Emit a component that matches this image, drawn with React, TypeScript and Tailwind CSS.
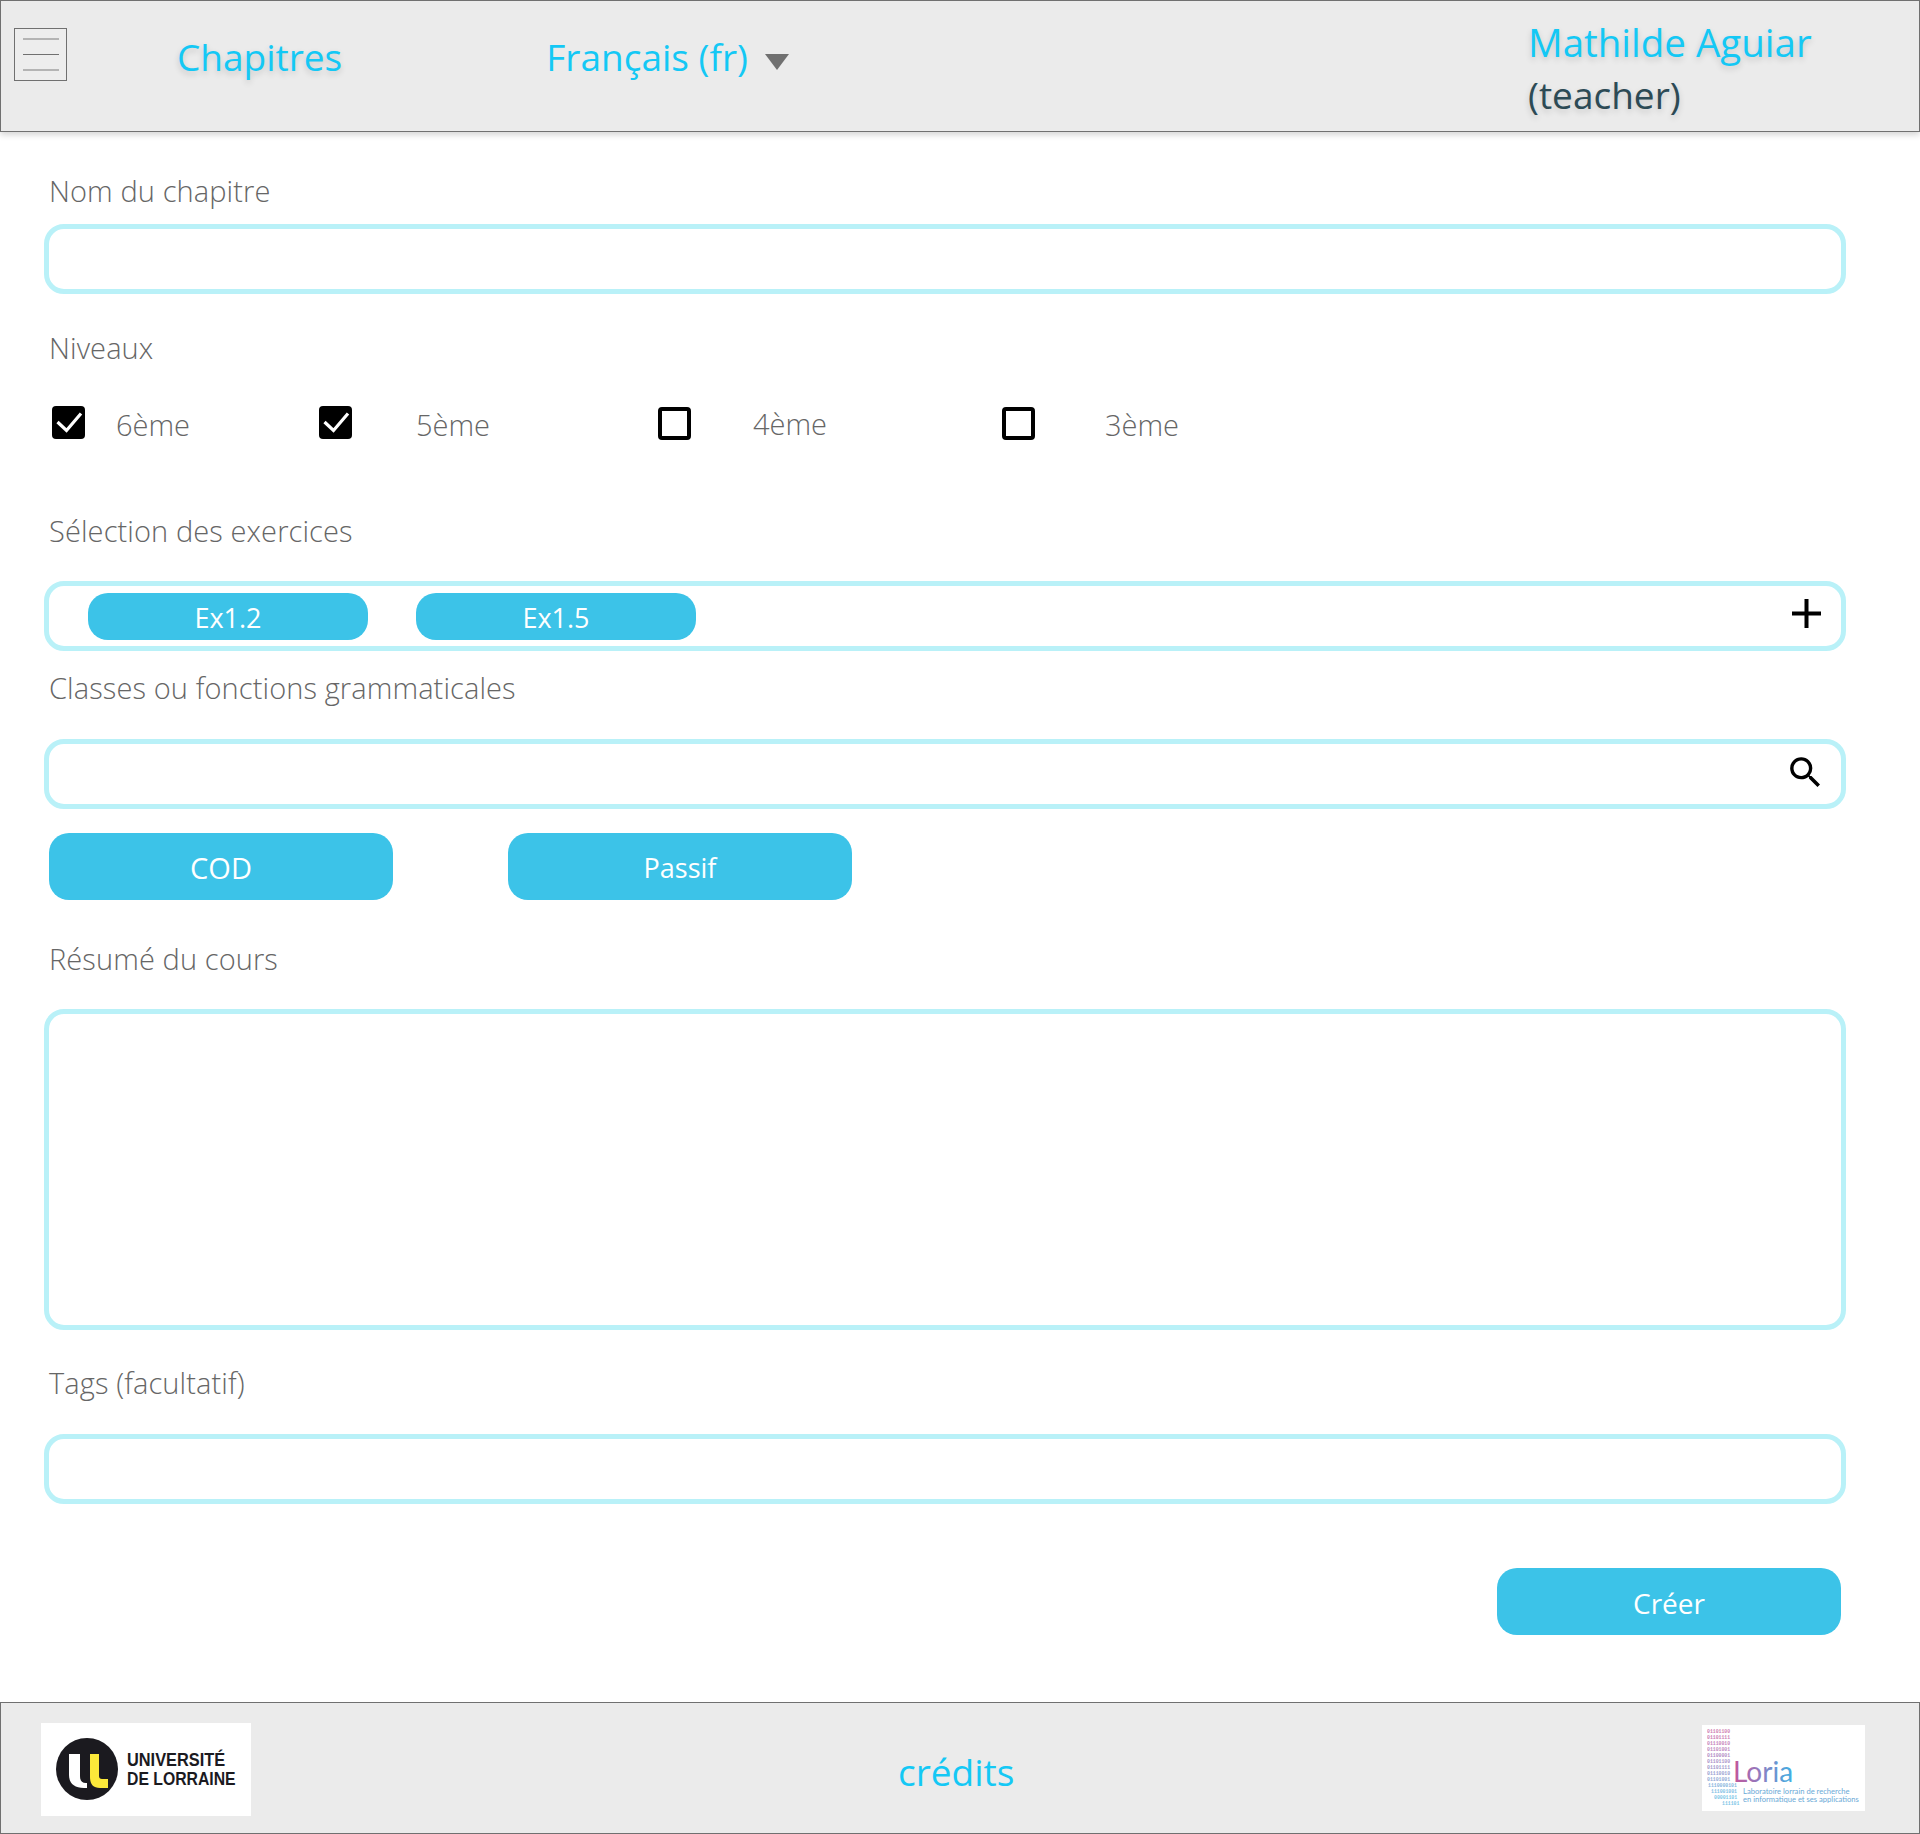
const labelClass = "ml-[5px] h-9 text-[29px] leading-9 font-light tracking-[0.1px] text-[#666666]";
const inputClass = "h-[70px] rounded-[20px] border-[5px] border-[#b9f1f8] bg-white";
const headerText = "[text-shadow:0_3px_6px_#00000029]";
const pillClass = "flex items-center justify-center bg-[#3cc3e8] pt-[3px] text-white font-normal";

const levels = [
  { name: "6ème", checked: true, item: "w-[267px]", text: "ml-[31px] mt-[2px]" },
  { name: "5ème", checked: true, item: "w-[339px]", text: "ml-[64px] mt-[2px]" },
  { name: "4ème", checked: false, item: "w-[344px] mt-px", text: "ml-[62px]" },
  { name: "3ème", checked: false, item: "w-[300px] mt-px", text: "ml-[70px] mt-px" },
];

const binaryRows = [
  { x: 0, y: 6, text: "01101100", fill: "#c45c9e" },
  { x: 0, y: 12, text: "01101111", fill: "#c060a4" },
  { x: 0, y: 18, text: "01110010", fill: "#b865aa" },
  { x: 0, y: 24, text: "01101001", fill: "#ae6bb0" },
  { x: 0, y: 30, text: "01100001", fill: "#a070b6" },
  { x: 0, y: 36, text: "01101100", fill: "#9678bc" },
  { x: 0, y: 42, text: "01101111", fill: "#8a80c0" },
  { x: 0, y: 48, text: "01110010", fill: "#7f8ac6" },
  { x: 0, y: 54, text: "01101001", fill: "#7694cc" },
  { x: 1, y: 60, text: "1110000101", fill: "#6aa4d6" },
  { x: 4, y: 66, text: "111001001", fill: "#62b0de" },
  { x: 7, y: 72, text: "00001101", fill: "#5cb8e2" },
  { x: 15, y: 78, text: "111101", fill: "#5cb8e2" },
];

function CheckBox({ checked }: { checked: boolean }) {
  if (checked) {
    return (
      <span className="flex h-[33px] w-[33px] shrink-0 items-center justify-center rounded-[4px] bg-black">
        <svg viewBox="0 0 33 33" className="h-[33px] w-[33px]" fill="none" stroke="#fff" strokeWidth="3.2">
          <path d="M5.5 16 L14.5 24.5 L29 7.5" />
        </svg>
      </span>
    );
  }
  return <span className="h-[33px] w-[33px] shrink-0 rounded-[4px] border-[4px] border-black bg-white" />;
}

function UlLogo() {
  return (
    <div className="flex h-[93px] w-[210px] items-center bg-white pl-[15px]">
      <svg viewBox="0 0 62 62" className="h-[62px] w-[62px] shrink-0">
        <circle cx="31" cy="31" r="31" fill="#1b1a1f" />
        <path d="M13 16h11v22c0 5 2 7 6 7h1v5h-3c-10 0-15-5-15-13z" fill="#fff" />
        <path d="M34 16h9v22c0 2 1 3 3 3h6v9H44c-7 0-10-4-10-11z" fill="#fbe83a" />
      </svg>
      <div className="ml-[9px] font-['Liberation_Sans',sans-serif] text-[19px] leading-[19px] font-bold text-[#1b1a1f]">
        <div className="w-[98px] origin-left scale-x-[0.86] whitespace-nowrap">UNIVERSITÉ</div>
        <div className="w-[108px] origin-left scale-x-[0.83] whitespace-nowrap">DE LORRAINE</div>
      </div>
    </div>
  );
}

function LoriaLogo() {
  return (
    <div className="h-[86px] w-[163px] bg-white">
      <svg viewBox="0 0 163 86" className="h-[86px] w-[163px]">
        <defs>
          <linearGradient id="loria" x1="0" x2="1" y1="0" y2="0">
            <stop offset="0" stopColor="#c4549a" />
            <stop offset="0.45" stopColor="#8f7cc0" />
            <stop offset="1" stopColor="#3fb0e4" />
          </linearGradient>
        </defs>
        {binaryRows.map((row) => (
          <text key={row.y} x={5 + row.x} y={row.y + 2} fontSize="4.8" fontWeight="700" fontFamily="Liberation Mono, monospace" fill={row.fill} opacity="0.8">
            {row.text}
          </text>
        ))}
        <text x="31" y="57" fontSize="28" fontFamily="Lato, sans-serif" fill="url(#loria)">
          Loria
        </text>
        <text x="41" y="68.5" fontSize="7.6" fontFamily="Lato, sans-serif" fill="#6aa9d6">
          Laboratoire lorrain de recherche
        </text>
        <text x="41" y="76.5" fontSize="7.6" fontFamily="Lato, sans-serif" fill="#6aa9d6">
          en informatique et ses applications
        </text>
      </svg>
    </div>
  );
}

export default function App() {
  return (
    <div className="flex h-[1834px] w-full flex-col bg-white font-['Open_Sans',sans-serif]">
      <header className="relative flex h-[132px] shrink-0 border border-[#707070] bg-[#ebebeb] shadow-[0_3px_6px_#00000029]">
        <button className="ml-[13px] mt-[27px] flex h-[53px] w-[53px] flex-col items-center gap-[14px] border border-[#707070] bg-[#ededed] pt-[9px]">
          <span className="h-[2px] w-9 bg-[#b4b4b4]" />
          <span className="h-px w-9 bg-[#707070]" />
          <span className="h-[2px] w-9 bg-[#b4b4b4]" />
        </button>
        <a className={`ml-[110px] mt-8 h-12 text-[37px] leading-[48px] text-[#14c8f5] ${headerText}`}>Chapitres</a>
        <a className="ml-[204px] mt-8 h-12 text-[37px] leading-[48px] text-[#14c8f5]">Français (fr)</a>
        <svg viewBox="0 0 24 16" className="ml-[17px] mt-[53px] h-4 w-6">
          <path d="M0 0H24L12 16Z" fill="#707070" />
        </svg>
        <div className={`ml-auto mt-[15px] flex w-[391px] flex-col ${headerText}`}>
          <span className="text-[38.5px] leading-[52px] text-[#14c8f5]">Mathilde Aguiar</span>
          <span className="mt-px text-[37px] leading-[52px] text-[#2c4a55]">(teacher)</span>
        </div>
      </header>

      <main className="flex flex-col pl-[44px] pr-[74px] pt-[41px]">
        <div className={labelClass}>Nom du chapitre</div>
        <div className={`mt-[15px] ${inputClass}`} />

        <div className={`mt-9 ${labelClass}`}>Niveaux</div>
        <div className="ml-2 mt-10 flex h-[34px] items-start">
          {levels.map((level) => (
            <div key={level.name} className={`flex items-start ${level.item}`}>
              <CheckBox checked={level.checked} />
              <span className={`text-[29px] leading-[33px] font-light text-[#666666] ${level.text}`}>{level.name}</span>
            </div>
          ))}
        </div>

        <div className={`mt-[73px] ${labelClass}`}>Sélection des exercices</div>
        <div className={`mt-8 flex items-start ${inputClass}`}>
          <div className={`ml-[39px] mt-[7px] h-[47px] w-[280px] rounded-[20px] text-[27px] ${pillClass}`}>Ex1.2</div>
          <div className={`ml-12 mt-[7px] h-[47px] w-[280px] rounded-[20px] text-[27px] ${pillClass}`}>Ex1.5</div>
          <svg viewBox="0 0 29 29" className="ml-auto mr-5 mt-[13px] h-[29px] w-[29px]" fill="none" stroke="#000" strokeWidth="4">
            <path d="M14.5 0V29M0 14.5H29" />
          </svg>
        </div>

        <div className={`mt-[19px] ${labelClass}`}>Classes ou fonctions grammaticales</div>
        <div className={`mt-[33px] flex items-start justify-end ${inputClass}`}>
          <svg viewBox="0 0 24 24" className="mr-[15px] mt-2 h-[41px] w-[41px]" fill="#000">
            <path d="M15.5 14h-.79l-.28-.27A6.47 6.47 0 0 0 16 9.5 6.5 6.5 0 1 0 9.5 16c1.61 0 3.09-.59 4.23-1.57l.27.28v.79l5 4.99L20.49 19l-4.99-5zm-6 0C7.01 14 5 11.99 5 9.5S7.01 5 9.5 5 14 7.01 14 9.5 11.99 14 9.5 14z" />
          </svg>
        </div>
        <div className="ml-[5px] mt-6 flex gap-[115px]">
          <div className={`h-[67px] w-[344px] rounded-[20px] text-[29px] ${pillClass}`}>COD</div>
          <div className={`h-[67px] w-[344px] rounded-[20px] text-[27px] ${pillClass}`}>Passif</div>
        </div>

        <div className={`mt-[41px] ${labelClass}`}>Résumé du cours</div>
        <div className={`mt-8 !h-[321px] ${inputClass}`} />

        <div className={`mt-[35px] ${labelClass}`}>Tags (facultatif)</div>
        <div className={`mt-[33px] ${inputClass}`} />

        <div className="mt-16 flex justify-end pr-[5px]">
          <div className={`h-[67px] w-[344px] rounded-[20px] text-[28px] ${pillClass}`}>Créer</div>
        </div>
      </main>

      <footer className="mt-auto flex h-[132px] shrink-0 items-center border border-[#707070] bg-[#ebebeb]">
        <div className="ml-10 mt-[2px]">
          <UlLogo />
        </div>
        <a className="ml-[647px] mt-[7px] text-[37px] leading-[48px] text-[#14c8f5]">crédits</a>
        <div className="ml-auto mr-[54px]">
          <LoriaLogo />
        </div>
      </footer>
    </div>
  );
}
